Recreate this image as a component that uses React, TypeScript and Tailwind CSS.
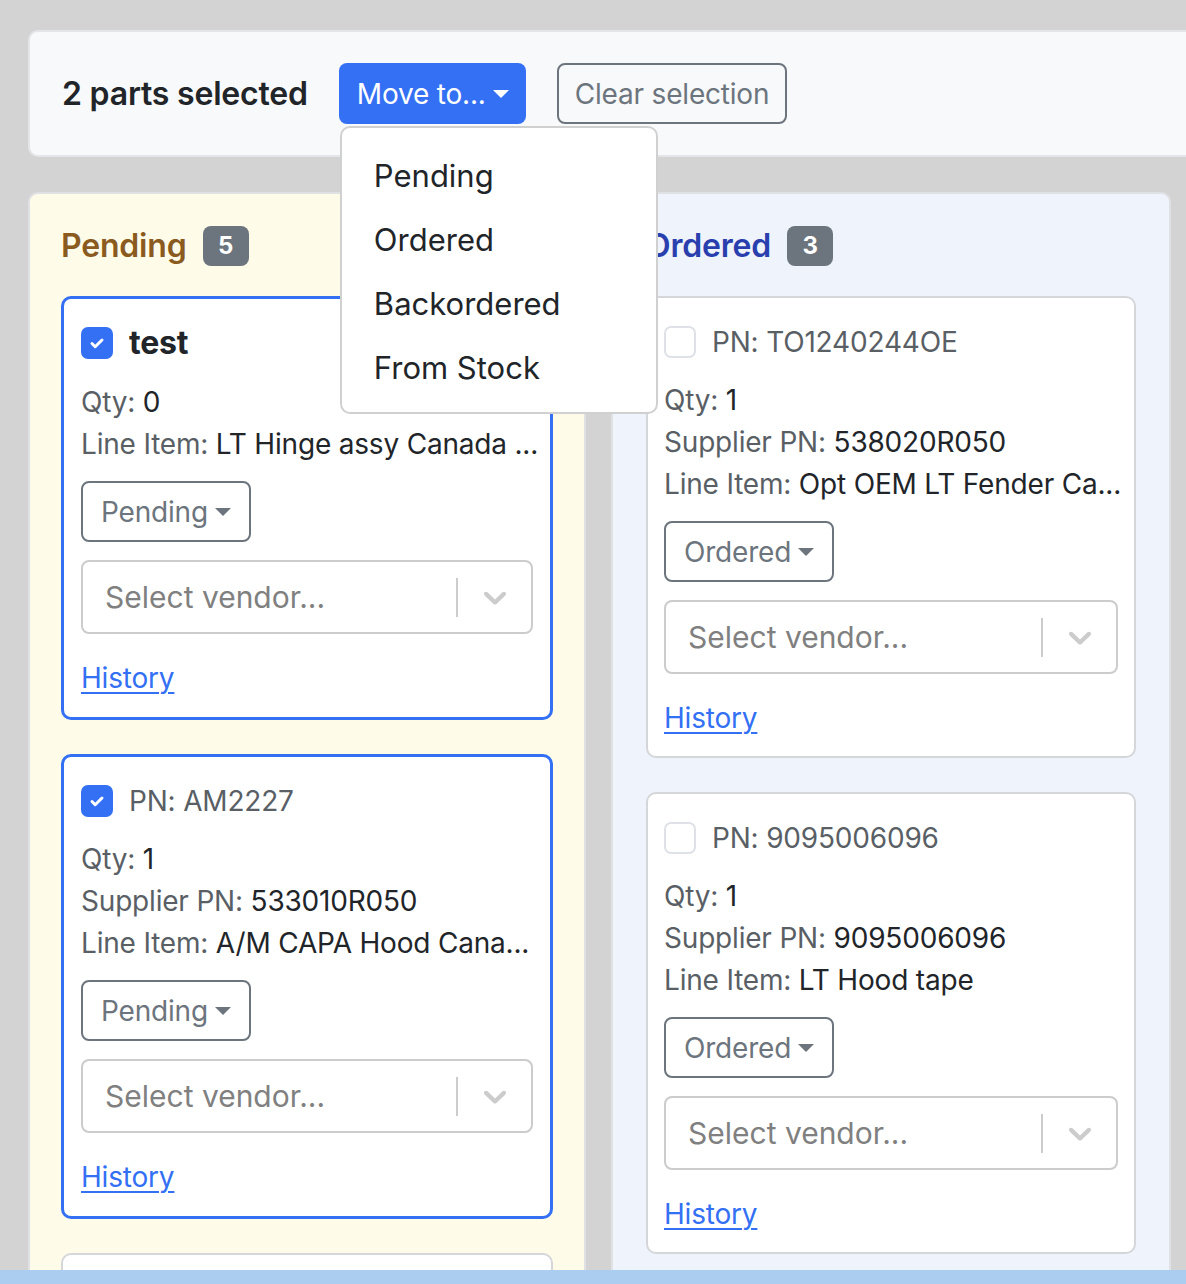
import React from "react";

const Caret = ({ color }: { color: string }) => (
  <span
    className="inline-block ml-[7px] align-middle w-0 h-0 border-l-[8px] border-r-[8px] border-t-[8px] border-l-transparent border-r-transparent"
    style={{ borderTopColor: color }}
  />
);

const Chevron = () => (
  <svg width="38" height="38" viewBox="0 0 20 20" fill="#cccccc">
    <path d="M4.516 7.548c0.436-0.446 1.043-0.481 1.576 0l3.908 3.747 3.908-3.747c0.533-0.481 1.141-0.446 1.574 0 0.436 0.445 0.408 1.197 0 1.615-0.406 0.418-4.695 4.502-4.695 4.502-0.217 0.223-0.502 0.335-0.787 0.335s-0.57-0.112-0.789-0.335c0 0-4.287-4.084-4.695-4.502s-0.436-1.17 0-1.615z" />
  </svg>
);

const Checkbox = ({ checked }: { checked: boolean }) =>
  checked ? (
    <span className="flex items-center justify-center w-[32px] h-[32px] rounded-[7px] bg-[#3370f4] shrink-0">
      <svg width="20" height="20" viewBox="0 0 20 20" fill="none">
        <path d="M5 10.5l3.2 3.2L15 7" stroke="#fff" strokeWidth="3" strokeLinecap="round" strokeLinejoin="round" />
      </svg>
    </span>
  ) : (
    <span className="block w-[32px] h-[32px] rounded-[7px] border-2 border-[#dee2e6] bg-white shrink-0" />
  );

type Part = {
  selected: boolean;
  title: string;
  bold?: boolean;
  qty: string;
  supplier?: string;
  line: string;
  status: string;
};

const Card = ({ p }: { p: Part }) => (
  <div
    className={
      "bg-white rounded-[10px] " +
      (p.selected
        ? "border-[3px] border-[#3370f4] pt-[19px] pb-[18px] px-[17px]"
        : "border-2 border-[#d4d6d9] pt-[19px] pb-[17px] px-[16px]")
    }
  >
    <div className="h-[50px] flex items-center gap-[16px]">
      <Checkbox checked={p.selected} />
      {p.bold ? (
        <span className="text-[32px] font-bold text-[#212529]">{p.title}</span>
      ) : (
        <span className="text-[28px] text-[#595f65]">{p.title}</span>
      )}
    </div>
    <div className={(p.bold ? "mt-[13px]" : "mt-[12px]") + " text-[28px] leading-[42px]"}>
      <div className="whitespace-nowrap">
        <span className="text-[#595f65]">Qty: </span>
        <span className="text-[#212529]">{p.qty}</span>
      </div>
      {p.supplier && (
        <div className="whitespace-nowrap">
          <span className="text-[#595f65]">Supplier PN: </span>
          <span className="text-[#212529]">{p.supplier}</span>
        </div>
      )}
      <div className="whitespace-nowrap">
        <span className="text-[#595f65]">Line Item: </span>
        <span className="text-[#212529]">{p.line}</span>
      </div>
    </div>
    <div className="mt-[16px]">
      <span className="inline-flex items-center h-[61px] px-[18px] border-2 border-[#6c757d] rounded-[8px] text-[28px] text-[#6c757d]">
        {p.status}
        <Caret color="#6c757d" />
      </span>
    </div>
    <div className="mt-[18px] h-[74px] border-2 border-[#cccccc] rounded-[8px] flex items-center">
      <span className="flex-1 pl-[22px] text-[30px] text-[#808080] tracking-normal">Select vendor...</span>
      <span className="w-[2px] h-[39px] bg-[#cccccc]" />
      <span className="w-[73px] flex items-center justify-center">
        <Chevron />
      </span>
    </div>
    <div className="mt-[23px] text-[28px] leading-[42px]">
      <span className="text-[#3370f4] underline decoration-2 underline-offset-[4px]">History</span>
    </div>
  </div>
);

const Column = ({
  title,
  count,
  titleColor,
  bg,
  parts,
  width,
  px,
  extra,
}: {
  title: string;
  count: string;
  titleColor: string;
  bg: string;
  parts: Part[];
  width: string;
  px: string;
  extra?: boolean;
}) => (
  <div className={"border-2 border-[#dfe1e4] rounded-[10px] pt-[28px] h-[1200px] " + width + " " + px + " " + bg}>
    <div className="h-[48px] flex items-center gap-[16px]">
      <span className="text-[32px] font-semibold" style={{ color: titleColor }}>
        {title}
      </span>
      <span className="inline-flex items-center justify-center w-[46px] h-[40px] rounded-[8px] bg-[#6c757d] text-white text-[24px] font-bold">
        {count}
      </span>
    </div>
    <div className="mt-[26px] flex flex-col gap-[34px]">
      {parts.map((p, i) => (
        <Card key={i} p={p} />
      ))}
      {extra && <div className="h-[200px] bg-white border-2 border-[#d4d6d9] rounded-[10px]" />}
    </div>
  </div>
);

export default function App() {
  const pending: Part[] = [
    { selected: true, title: "test", bold: true, qty: "0", line: "LT Hinge assy Canada ...", status: "Pending" },
    {
      selected: true,
      title: "PN: AM2227",
      qty: "1",
      supplier: "533010R050",
      line: "A/M CAPA Hood Cana...",
      status: "Pending",
    },
  ];
  const ordered: Part[] = [
    {
      selected: false,
      title: "PN: TO1240244OE",
      qty: "1",
      supplier: "538020R050",
      line: "Opt OEM LT Fender Ca...",
      status: "Ordered",
    },
    {
      selected: false,
      title: "PN: 9095006096",
      qty: "1",
      supplier: "9095006096",
      line: "LT Hood tape",
      status: "Ordered",
    },
  ];
  return (
    <div className="relative w-[1186px] h-[1284px] overflow-hidden bg-[#d3d3d3] pt-[30px] pl-[28px] font-['Inter',sans-serif] tracking-[-0.012em]">
      <div className="w-[1200px] h-[127px] bg-[#f8f9fa] border-2 border-[#e3e5e8] rounded-[10px] flex items-center pl-[32px]">
        <span className="text-[32px] font-semibold text-[#212529]">2 parts selected</span>
        <div className="relative ml-[31px] z-10">
          <span className="inline-flex items-center h-[61px] pl-[18px] pr-[17px] bg-[#3370f4] rounded-[8px] text-[28px] text-white">
            Move to...
            <Caret color="#ffffff" />
          </span>
          <div className="absolute left-[1px] top-[63px] w-[318px] bg-white border-2 border-[#d0d0d0] rounded-[10px] pt-[16px] pb-[12px] tracking-normal">
            {["Pending", "Ordered", "Backordered", "From Stock"].map((t) => (
              <div key={t} className="h-[64px] flex items-center pl-[32px] text-[31px] text-[#212529]">
                {t}
              </div>
            ))}
          </div>
        </div>
        <span className="ml-[31px] inline-flex items-center h-[61px] px-[16px] border-2 border-[#6c757d] rounded-[8px] text-[28px] text-[#6c757d]">
          Clear selection
        </span>
      </div>
      <div className="mt-[35px] flex gap-[25px]">
        <Column
          title="Pending"
          count="5"
          titleColor="#8a5a1e"
          bg="bg-[#fefce9]"
          parts={pending}
          width="w-[558px]"
          px="px-[31px]"
          extra
        />
        <Column
          title="Ordered"
          count="3"
          titleColor="#2a3fae"
          bg="bg-[#eff4fc]"
          parts={ordered}
          width="w-[560px]"
          px="px-[33px]"
        />
      </div>
      <div className="absolute left-0 right-0 bottom-0 h-[14px] bg-[#abcdef]" />
    </div>
  );
}
